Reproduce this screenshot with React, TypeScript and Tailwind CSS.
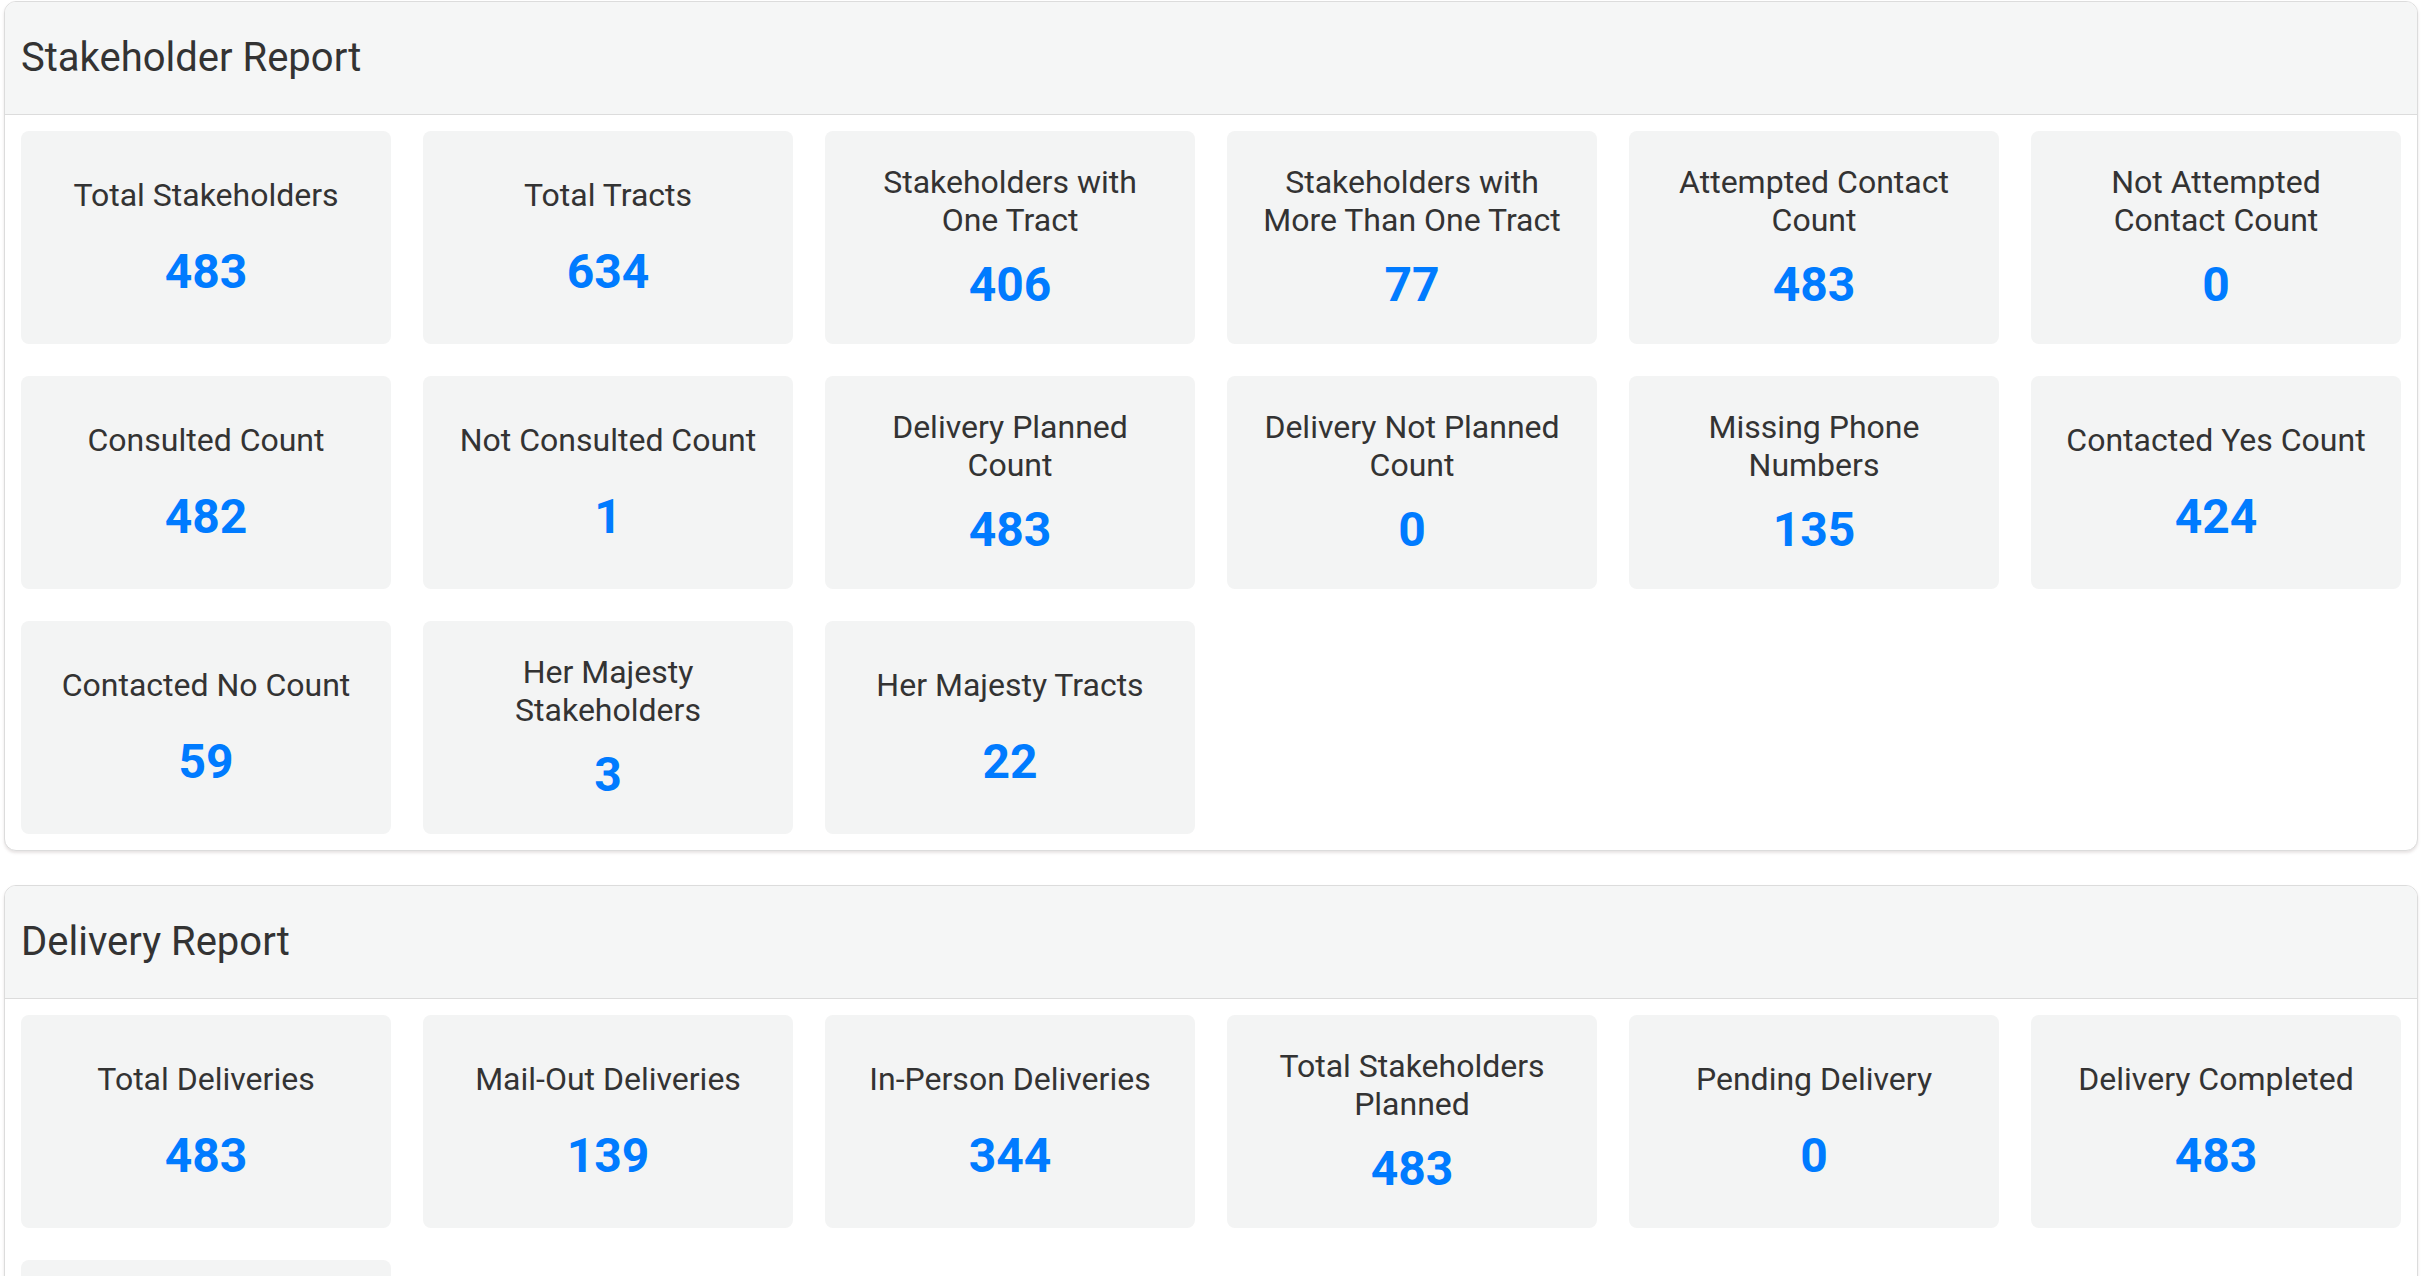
import React from "react";

type Stat = { label: string; value: string };

const stakeholder: Stat[] = [
  { label: "Total Stakeholders", value: "483" },
  { label: "Total Tracts", value: "634" },
  { label: "Stakeholders with One Tract", value: "406" },
  { label: "Stakeholders with More Than One Tract", value: "77" },
  { label: "Attempted Contact Count", value: "483" },
  { label: "Not Attempted Contact Count", value: "0" },
  { label: "Consulted Count", value: "482" },
  { label: "Not Consulted Count", value: "1" },
  { label: "Delivery Planned Count", value: "483" },
  { label: "Delivery Not Planned Count", value: "0" },
  { label: "Missing Phone Numbers", value: "135" },
  { label: "Contacted Yes Count", value: "424" },
  { label: "Contacted No Count", value: "59" },
  { label: "Her Majesty Stakeholders", value: "3" },
  { label: "Her Majesty Tracts", value: "22" },
];

const delivery: Stat[] = [
  { label: "Total Deliveries", value: "483" },
  { label: "Mail-Out Deliveries", value: "139" },
  { label: "In-Person Deliveries", value: "344" },
  { label: "Total Stakeholders Planned", value: "483" },
  { label: "Pending Delivery", value: "0" },
  { label: "Delivery Completed", value: "483" },
  { label: "Delivery Not Completed", value: "0" },
];

function Tile({ s }: { s: Stat }) {
  return (
    <div className="h-[213px] rounded-lg bg-[#f3f4f4] px-[32px] flex flex-col justify-evenly items-center text-center">
      <div className="text-[32px] leading-[38.4px] text-[#333333] font-normal">{s.label}</div>
      <div className="text-[48px] leading-[55px] -mt-[15px] font-bold text-[#007bff]">{s.value}</div>
    </div>
  );
}

function Section({ title, items, className }: { title: string; items: Stat[]; className?: string }) {
  return (
    <section
      className={
        "rounded-[12px] border border-[#dcdcdc] bg-white shadow-[0_2px_3px_rgba(120,100,100,0.18)] overflow-hidden " +
        (className ?? "")
      }
    >
      <div className="h-[113px] bg-[#f5f6f6] border-b border-[#dcdcdc] flex items-center px-[16px]">
        <h2 className="text-[40px] leading-none text-[#333333] font-normal">{title}</h2>
      </div>
      <div className="p-[16px] grid grid-cols-6 gap-[32px]">
        {items.map((s, i) => (
          <Tile key={i} s={s} />
        ))}
      </div>
    </section>
  );
}

export default function App() {
  return (
    <div
      className="min-h-screen bg-white pl-[4px] pr-[6px] pt-[1px]"
      style={{ fontFamily: "Roboto, 'Noto Sans', Arial, sans-serif" }}
    >
      <Section title="Stakeholder Report" items={stakeholder} className="mb-[34px]" />
      <Section title="Delivery Report" items={delivery} />
    </div>
  );
}
